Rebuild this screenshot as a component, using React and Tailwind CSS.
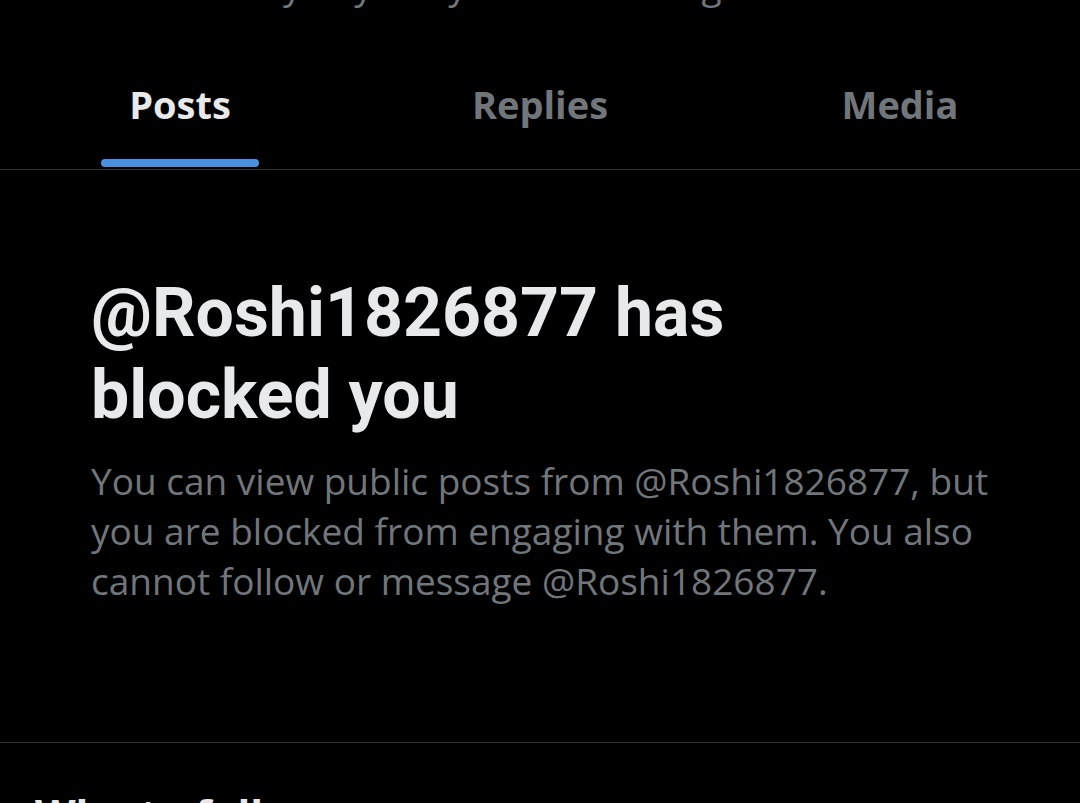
import React from 'react';

const tabs = [
  { label: 'Posts', active: true },
  { label: 'Replies' },
  { label: 'Media' },
];

export default function App() {
  return (
    <div className="w-[1080px] h-[803px] overflow-hidden bg-black font-['Open_Sans','Noto_Sans',sans-serif]">
      <div className="h-[12px] overflow-hidden relative">
        <p className="absolute left-[30px] top-[-40px] text-[37px] leading-[50px] text-[#71767b] whitespace-nowrap">
          Not followed by anyone you're following
        </p>
      </div>

      <div className="grid grid-cols-3 h-[158px] border-b border-[#2f3336]">
        {tabs.map((t) => (
          <div key={t.label} className="flex flex-col items-center justify-end">
            <span className={`text-[38px] leading-none font-bold pb-[36px] ${t.active ? 'text-[#e7e9ea]' : 'text-[#71767b]'}`}>
              {t.label}
            </span>
            <div className={`h-[8px] w-[158px] rounded-full mb-[2px] ${t.active ? 'bg-[#4a90e2]' : 'bg-transparent'}`} />
          </div>
        ))}
      </div>

      <div className="px-[91px] pt-[102px] h-[573px] border-b border-[#2f3336]">
        <h1 className="font-['Roboto',sans-serif] font-bold text-[68px] leading-[82px] text-[#e7e9ea] w-[740px]">
          @Roshi1826877 has blocked you
        </h1>
        <p className="mt-[20px] text-[37px] leading-[50px] text-[#71767b] w-[920px]">
          You can view public posts from @Roshi1826877, but you are blocked from engaging with them. You also cannot follow or message @Roshi1826877.
        </p>
      </div>

      <div className="px-[35px] pt-[50px]">
        <h2 className="text-[42px] font-bold text-[#e7e9ea] leading-none">Who to follow</h2>
      </div>
    </div>
  );
}
